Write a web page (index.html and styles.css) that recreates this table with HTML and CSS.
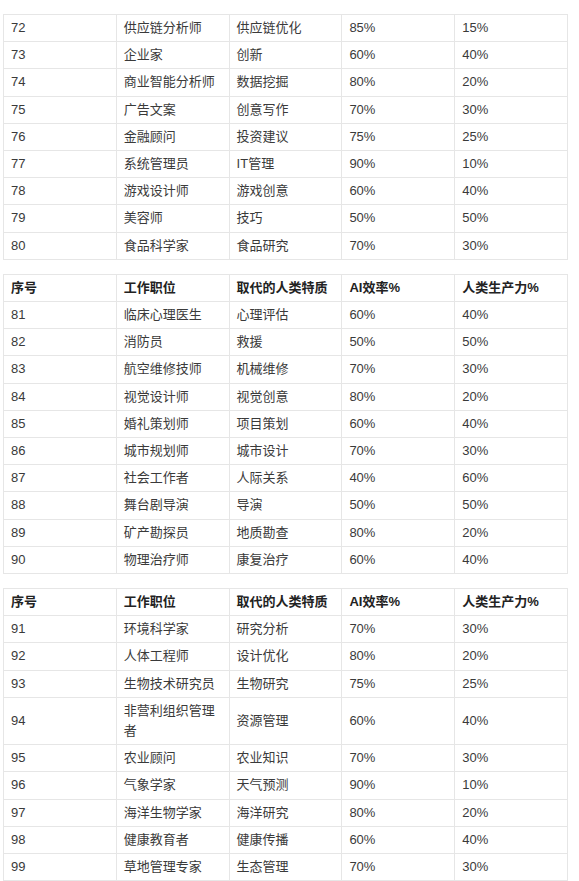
FILE: index.html
```html
<!DOCTYPE html>
<html lang="zh">
<head>
<meta charset="utf-8">
<link rel="stylesheet" href="styles.css">
</head>
<body>
<div class="page">
<table class="grid">
<tbody>
<tr><td>72</td><td>供应链分析师</td><td>供应链优化</td><td>85%</td><td>15%</td></tr>
<tr><td>73</td><td>企业家</td><td>创新</td><td>60%</td><td>40%</td></tr>
<tr><td>74</td><td>商业智能分析师</td><td>数据挖掘</td><td>80%</td><td>20%</td></tr>
<tr><td>75</td><td>广告文案</td><td>创意写作</td><td>70%</td><td>30%</td></tr>
<tr><td>76</td><td>金融顾问</td><td>投资建议</td><td>75%</td><td>25%</td></tr>
<tr><td>77</td><td>系统管理员</td><td>IT管理</td><td>90%</td><td>10%</td></tr>
<tr><td>78</td><td>游戏设计师</td><td>游戏创意</td><td>60%</td><td>40%</td></tr>
<tr><td>79</td><td>美容师</td><td>技巧</td><td>50%</td><td>50%</td></tr>
<tr><td>80</td><td>食品科学家</td><td>食品研究</td><td>70%</td><td>30%</td></tr>
</tbody>
</table>

<table class="grid">
<thead>
<tr><th>序号</th><th>工作职位</th><th>取代的人类特质</th><th>AI效率%</th><th>人类生产力%</th></tr>
</thead>
<tbody>
<tr><td>81</td><td>临床心理医生</td><td>心理评估</td><td>60%</td><td>40%</td></tr>
<tr><td>82</td><td>消防员</td><td>救援</td><td>50%</td><td>50%</td></tr>
<tr><td>83</td><td>航空维修技师</td><td>机械维修</td><td>70%</td><td>30%</td></tr>
<tr><td>84</td><td>视觉设计师</td><td>视觉创意</td><td>80%</td><td>20%</td></tr>
<tr><td>85</td><td>婚礼策划师</td><td>项目策划</td><td>60%</td><td>40%</td></tr>
<tr><td>86</td><td>城市规划师</td><td>城市设计</td><td>70%</td><td>30%</td></tr>
<tr><td>87</td><td>社会工作者</td><td>人际关系</td><td>40%</td><td>60%</td></tr>
<tr><td>88</td><td>舞台剧导演</td><td>导演</td><td>50%</td><td>50%</td></tr>
<tr><td>89</td><td>矿产勘探员</td><td>地质勘查</td><td>80%</td><td>20%</td></tr>
<tr><td>90</td><td>物理治疗师</td><td>康复治疗</td><td>60%</td><td>40%</td></tr>
</tbody>
</table>

<table class="grid">
<thead>
<tr><th>序号</th><th>工作职位</th><th>取代的人类特质</th><th>AI效率%</th><th>人类生产力%</th></tr>
</thead>
<tbody>
<tr><td>91</td><td>环境科学家</td><td>研究分析</td><td>70%</td><td>30%</td></tr>
<tr><td>92</td><td>人体工程师</td><td>设计优化</td><td>80%</td><td>20%</td></tr>
<tr><td>93</td><td>生物技术研究员</td><td>生物研究</td><td>75%</td><td>25%</td></tr>
<tr><td>94</td><td>非营利组织管理者</td><td>资源管理</td><td>60%</td><td>40%</td></tr>
<tr><td>95</td><td>农业顾问</td><td>农业知识</td><td>70%</td><td>30%</td></tr>
<tr><td>96</td><td>气象学家</td><td>天气预测</td><td>90%</td><td>10%</td></tr>
<tr><td>97</td><td>海洋生物学家</td><td>海洋研究</td><td>80%</td><td>20%</td></tr>
<tr><td>98</td><td>健康教育者</td><td>健康传播</td><td>60%</td><td>40%</td></tr>
<tr><td>99</td><td>草地管理专家</td><td>生态管理</td><td>70%</td><td>30%</td></tr>
</tbody>
</table>
</div>
</body>
</html>
```

FILE: styles.css
```css
html, body {
  margin: 0;
  padding: 0;
  background: #ffffff;
}

.page {
  padding: 14px 0 0 3px;
  font-family: "Liberation Sans", "Noto Sans CJK SC", Arial, sans-serif;
  font-size: 13px;
  color: #3a3a3a;
}

.grid {
  width: 565px;
  table-layout: fixed;
  border-collapse: collapse;
  margin-bottom: 14px;
}

.grid td,
.grid th {
  border: 1px solid #e6e6e6;
  padding: 3px 7px;
  line-height: 20.2px;
  text-align: left;
  vertical-align: middle;
}

.grid th {
  font-weight: bold;
  color: #222222;
}
```
